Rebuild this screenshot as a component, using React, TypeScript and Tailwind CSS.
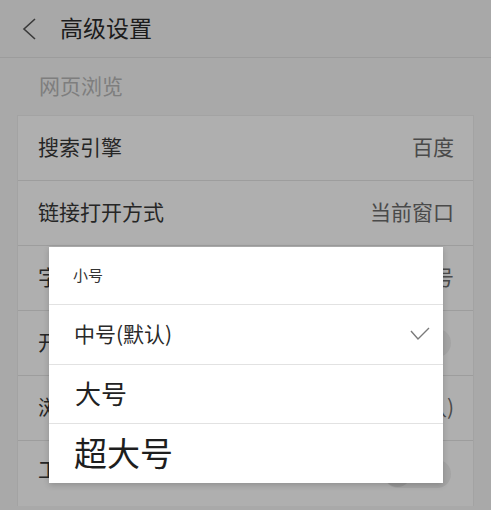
import React from "react";

const Toggle = () => (
  <div className="mr-[3px] mt-[3px] h-[28px] w-[67px] rounded-full bg-[#a4a4a4] flex items-center">
    <div className="h-[27px] w-[27px] rounded-full bg-[#969696]" />
  </div>
);

const Row = ({ label, value, toggle, last }: { label: string; value?: string; toggle?: boolean; last?: boolean }) => (
  <div className={`flex h-[65px] items-center justify-between pl-[20px] pr-[19px] ${last ? "pb-[3px]" : "pb-[3px] border-b border-[#9d9d9d]"}`}>
    <span className={`text-[21px] leading-none text-[#262626] ${last ? "-translate-y-[4px]" : ""}`}>{label}</span>
    {value && <span className="text-[21px] leading-none text-[#4a4a4a]">{value}</span>}
    {toggle && <Toggle />}
  </div>
);

export default function App() {
  return (
    <div className="relative h-[510px] w-[491px] overflow-hidden bg-[#a9a9a9] font-['Noto_Sans_CJK_SC','Noto_Sans',sans-serif]">
      <div className="flex h-[58px] items-center border-b border-[#9c9c9c] bg-[#a8a8a8] pb-[3px]">
        <svg className="ml-[22px] mt-[3px]" width="16" height="24" viewBox="0 0 16 24" fill="none">
          <polyline points="13,2 2,12 13,22" stroke="#3a3a3a" strokeWidth="1.6" strokeLinejoin="miter" />
        </svg>
        <span className="ml-[22px] text-[23px] leading-none text-[#1c1c1c]">高级设置</span>
      </div>
      <div className="flex h-[57px] items-center pb-[2px] pl-[39px]">
        <span className="text-[21px] leading-none text-[#7e7e7e]">网页浏览</span>
      </div>
      <div className="mx-[17px] border-x border-t border-[#a3a3a3] bg-[#afafaf]">
        <Row label="搜索引擎" value="百度" />
        <Row label="链接打开方式" value="当前窗口" />
        <Row label="字体大小" value="中号" />
        <Row label="开启无图模式" toggle />
        <Row label="浏览器标识" value="手机(默认)" />
        <Row label="工具箱隐藏" toggle last />
      </div>

      <div className="absolute left-[49px] top-[247px] w-[394px] bg-white shadow-[0_2px_6px_rgba(0,0,0,0.18)]">
        <div className="flex h-[58px] items-center border-b border-[#e2e2e2] pb-[2px] pl-[24px]">
          <span className="text-[15px] leading-none text-[#333]">小号</span>
        </div>
        <div className="flex h-[60px] items-center justify-between border-b border-[#e2e2e2] pb-[2px] pl-[25px] pr-[13px]">
          <span className="text-[21px] leading-none text-[#2a2a2a]">中号(默认)</span>
          <svg width="20" height="14" viewBox="0 0 20 14" fill="none">
            <polyline points="1,4 8,12 19,1" stroke="#7a7a7a" strokeWidth="1.4" />
          </svg>
        </div>
        <div className="flex h-[59px] items-center border-b border-[#e2e2e2] pb-[2px] pl-[26px]">
          <span className="text-[26px] leading-none text-[#222]">大号</span>
        </div>
        <div className="flex h-[59px] items-center pb-[2px] pl-[25px]">
          <span className="text-[33px] leading-none text-[#1e1e1e]">超大号</span>
        </div>
      </div>
    </div>
  );
}
